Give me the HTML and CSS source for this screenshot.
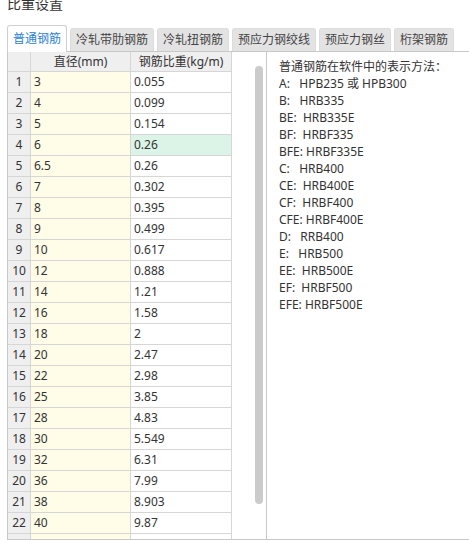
FILE: index.html
```html
<!DOCTYPE html>
<html lang="zh">
<head>
<meta charset="utf-8">
<title>比重设置</title>
<link rel="stylesheet" href="styles.css">
</head>
<body>
<div class="page">
  <div class="title">比重设置</div>
  <div class="tabs">
    <div class="tab active">普通钢筋</div>
    <div class="tab">冷轧带肋钢筋</div>
    <div class="tab">冷轧扭钢筋</div>
    <div class="tab">预应力钢绞线</div>
    <div class="tab">预应力钢丝</div>
    <div class="tab">桁架钢筋</div>
  </div>
  <div class="panel">
    <div class="grid-area">
      <div class="grid-wrap">
        <div class="grid">
          <div class="c hd num"></div><div class="c hd">直径(mm)</div><div class="c hd">钢筋比重(kg/m)</div>
          <div class="c num">1</div><div class="c dia">3</div><div class="c wt">0.055</div>
          <div class="c num">2</div><div class="c dia">4</div><div class="c wt">0.099</div>
          <div class="c num">3</div><div class="c dia">5</div><div class="c wt">0.154</div>
          <div class="c num">4</div><div class="c dia">6</div><div class="c wt sel">0.26</div>
          <div class="c num">5</div><div class="c dia">6.5</div><div class="c wt">0.26</div>
          <div class="c num">6</div><div class="c dia">7</div><div class="c wt">0.302</div>
          <div class="c num">7</div><div class="c dia">8</div><div class="c wt">0.395</div>
          <div class="c num">8</div><div class="c dia">9</div><div class="c wt">0.499</div>
          <div class="c num">9</div><div class="c dia">10</div><div class="c wt">0.617</div>
          <div class="c num">10</div><div class="c dia">12</div><div class="c wt">0.888</div>
          <div class="c num">11</div><div class="c dia">14</div><div class="c wt">1.21</div>
          <div class="c num">12</div><div class="c dia">16</div><div class="c wt">1.58</div>
          <div class="c num">13</div><div class="c dia">18</div><div class="c wt">2</div>
          <div class="c num">14</div><div class="c dia">20</div><div class="c wt">2.47</div>
          <div class="c num">15</div><div class="c dia">22</div><div class="c wt">2.98</div>
          <div class="c num">16</div><div class="c dia">25</div><div class="c wt">3.85</div>
          <div class="c num">17</div><div class="c dia">28</div><div class="c wt">4.83</div>
          <div class="c num">18</div><div class="c dia">30</div><div class="c wt">5.549</div>
          <div class="c num">19</div><div class="c dia">32</div><div class="c wt">6.31</div>
          <div class="c num">20</div><div class="c dia">36</div><div class="c wt">7.99</div>
          <div class="c num">21</div><div class="c dia">38</div><div class="c wt">8.903</div>
          <div class="c num">22</div><div class="c dia">40</div><div class="c wt">9.87</div>
          <div class="c num"></div><div class="c dia"></div><div class="c wt"></div>
        </div>
      </div>
      <div class="track"><div class="thumb"></div></div>
    </div>
    <div class="legend">
<div class="line">普通钢筋在软件中的表示方法：</div>
<div class="line">A:   HPB235 或 HPB300</div>
<div class="line">B:   HRB335</div>
<div class="line">BE:  HRB335E</div>
<div class="line">BF:  HRBF335</div>
<div class="line">BFE: HRBF335E</div>
<div class="line">C:   HRB400</div>
<div class="line">CE:  HRB400E</div>
<div class="line">CF:  HRBF400</div>
<div class="line">CFE: HRBF400E</div>
<div class="line">D:   RRB400</div>
<div class="line">E:   HRB500</div>
<div class="line">EE:  HRB500E</div>
<div class="line">EF:  HRBF500</div>
<div class="line">EFE: HRBF500E</div>
    </div>
  </div>
</div>
</body>
</html>
```

FILE: styles.css
```css
* { box-sizing: border-box; }
html, body {
  margin: 0;
  padding: 0;
  background: #ffffff;
  overflow: hidden;
}
body {
  width: 469px;
  height: 543px;
  font-family: "Noto Sans", "Noto Sans CJK SC", sans-serif;
  font-size: 12px;
  color: #333333;
}
.page {
  padding-left: 7px;
  width: 471px;
}
.title {
  font-size: 14px;
  line-height: 14px;
  height: 14px;
  margin-top: -3px;
  color: #333333;
}
.tabs {
  margin-top: 14px;
  height: 26px;
  display: flex;
  align-items: flex-end;
  gap: 3px;
}
.tab {
  height: 23px;
  padding: 0 5px;
  display: flex;
  align-items: center;
  background: #e3e3e3;
  border: 1px solid #dcdcdc;
  border-bottom: none;
  border-radius: 3px 3px 0 0;
  color: #444444;
  white-space: nowrap;
  line-height: 1;
}
.tab.active {
  height: 27px;
  margin-bottom: -1px;
  background: #ffffff;
  border-color: #cfcfcf;
  color: #2b7fd6;
  position: relative;
  z-index: 1;
  padding-bottom: 1px;
}
.panel {
  height: 489px;
  border: 1px solid #c8c8c8;
  border-right: none;
  display: flex;
}
.grid-area {
  width: 258px;
  display: flex;
  overflow: hidden;
}
.grid-wrap {
  flex: 1;
  overflow: hidden;
}
.grid {
  display: grid;
  grid-template-columns: 23px 100px 101px;
  grid-auto-rows: 21px;
  grid-template-rows: 20px;
  width: 224px;
}
.c {
  border-right: 1px solid #d6d6d6;
  border-bottom: 1px solid #d6d6d6;
  display: flex;
  align-items: center;
  padding-left: 3px;
  white-space: nowrap;
  line-height: 1;
}
.hd {
  background: #efefef;
  justify-content: center;
  padding-left: 0;
}
.num {
  background: #efefef;
  justify-content: center;
  padding-left: 0;
}
.dia { background: #fffde7; }
.wt { background: #ffffff; }
.wt.sel { background: #dcf4e8; }
.track {
  width: 12px;
  padding-top: 14px;
  padding-left: 1px;
}
.thumb {
  width: 8px;
  height: 438px;
  background: #cbcbcb;
  border-radius: 4px;
}
.legend {
  flex: 1;
  border-left: 1px solid #c8c8c8;
  padding: 6px 0 0 12px;
}
.line {
  line-height: 17px;
  height: 17px;
  white-space: pre;
}
```
